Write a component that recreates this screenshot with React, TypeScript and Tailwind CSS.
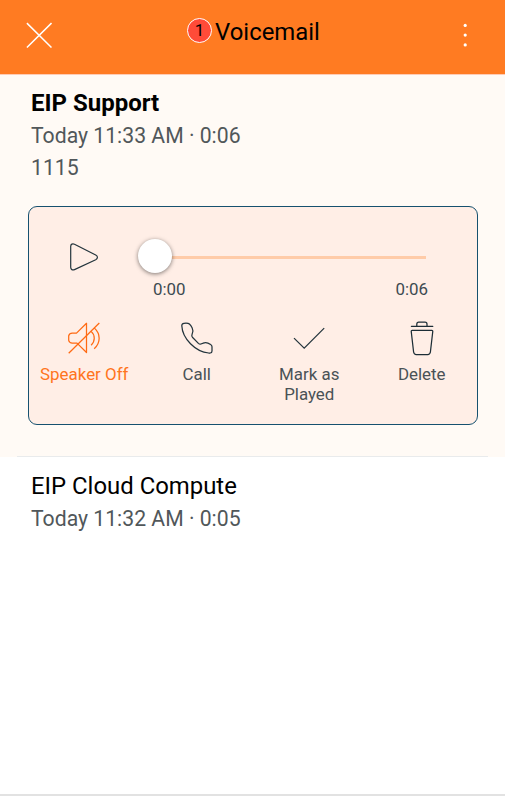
import type { ReactNode } from "react";

function CloseIcon() {
  return (
    <svg className="size-[26px]" viewBox="0 0 26 26" fill="none" stroke="#fff" strokeWidth="1.5">
      <path d="M0.9 1.1 25.5 25.5M25.5 1.1 0.9 25.5" />
    </svg>
  );
}

function MoreIcon() {
  return (
    <svg className="h-[26px] w-[6px]" viewBox="0 0 6 26" fill="#fff">
      <circle cx="3.2" cy="3.4" r="1.6" />
      <circle cx="3.2" cy="13.1" r="1.6" />
      <circle cx="3.2" cy="22.9" r="1.6" />
    </svg>
  );
}

function PlayIcon() {
  return (
    <svg className="h-[30px] w-[30px] shrink-0" viewBox="0 0 30 30" fill="none" stroke="#23343c" strokeWidth="1.2" strokeLinejoin="round">
      <path d="M1.7 4.4V25.3C1.7 27.5 3.5 28.5 5.5 27.6L26.7 17.7C29 16.5 29 14.2 26.7 13L5.5 2.2C3.5 1.3 1.7 2.2 1.7 4.4Z" />
    </svg>
  );
}

function SpeakerOffIcon() {
  return (
    <svg className="h-[36px] w-[36px]" viewBox="0 0 36 36" fill="none" stroke="#ff6a13" strokeWidth="1.25" strokeLinejoin="round">
      <path d="M20.5 3.3V32.5L11 23.1H6.2C4.2 23.1 3.2 22.2 2.7 20.4V15.7C3.2 14 4.2 13.1 6.2 13.1H10.5L20.5 3.3Z" />
      <path d="M33.3 3 2.7 33.2" />
      <path d="M25.1 11.4C29.3 15 29.3 21.5 25.1 25.2" />
      <path d="M28.2 7.9C34.8 13.8 34.8 22.8 28.2 28.8" />
    </svg>
  );
}

function PhoneIcon() {
  return (
    <svg className="h-[36px] w-[36px]" viewBox="0 0 36 36" fill="none" stroke="#23343c" strokeWidth="1.25" strokeLinejoin="round">
      <path d="M5 3.3C3.3 3.5 2.7 4.2 2.8 5.8C3.4 18.6 16.4 31.9 29.7 33H31.2C32.5 32.9 33 32.2 33 30.9V26.8C33 25.7 32.6 25.1 31.6 24.5C28.8 22.5 26.6 21.9 24.2 23.1L22 24C20.9 24.3 20.2 24.1 19.4 23.4L13.4 17.2C12.6 16.3 12.6 15.4 13.1 14.2C14.2 12 14.2 9.8 13.1 7.7C12.4 6.3 11.6 5.1 10.4 4C9.4 3.1 7.3 3.1 5 3.3Z" />
    </svg>
  );
}

function CheckIcon() {
  return (
    <svg className="h-[36px] w-[36px]" viewBox="0 0 36 36" fill="none" stroke="#23343c" strokeWidth="1.25">
      <path d="M3 18.1 13.2 28.2 33.2 8.1" />
    </svg>
  );
}

function TrashIcon() {
  return (
    <svg className="h-[36px] w-[36px]" viewBox="0 0 36 36" fill="none" stroke="#1c2d36" strokeWidth="1.25" strokeLinejoin="round" strokeLinecap="round">
      <path d="M7.4 6.3H28.8" />
      <path d="M12.8 6V4.2C12.8 2.8 13.4 2.2 14.8 2.2H21C22.4 2.2 23 2.8 23 4.2V6" />
      <path d="M7.2 11.2C7.2 10.6 7.5 10.3 8.1 10.3H27.9C28.5 10.3 28.8 10.6 28.8 11.2L26.4 32C26.1 33.8 25.4 34.6 23.7 34.6H12.3C10.6 34.6 9.9 33.8 9.6 32Z" />
    </svg>
  );
}

function Action({ icon, label, active }: { icon: ReactNode; label: ReactNode; active?: boolean }) {
  return (
    <div className={`flex flex-col items-center text-center text-[16.9px] leading-5 ${active ? "text-[#ff7420]" : "text-[#4a5256]"}`}>
      {icon}
      <span className="mt-[8px] whitespace-nowrap">{label}</span>
    </div>
  );
}

export default function App() {
  return (
    <div className="flex h-[800px] w-[505px] flex-col overflow-hidden bg-white font-['Roboto',sans-serif]">
      <header className="flex h-[75px] shrink-0 items-start justify-between border-b border-[#ffcbb4] bg-[#ff7b22] pr-[37px] pl-[26px]">
        <button className="mt-[22px]"><CloseIcon /></button>
        <div className="flex pt-4 pr-[7px]">
          <span className="mt-[2px] flex size-[25px] items-center justify-center rounded-full border-[1.5px] border-white bg-[#ff4b38] text-[17px] leading-none text-black">1</span>
          <h1 className="ml-[3px] text-[23.9px] leading-8 text-black">Voicemail</h1>
        </div>
        <button className="mt-[22px]"><MoreIcon /></button>
      </header>

      <section className="h-[382px] shrink-0 bg-[#fffaf5] px-7 pt-3">
        <div className="pl-[3px] text-[21.2px] leading-8 text-[#51575a]">
          <h2 className="text-2xl leading-8 font-bold text-black">EIP Support</h2>
          <p className="pt-px">Today 11:33 AM · 0:06</p>
          <p>1115</p>
        </div>

        <div className="mt-[22px] h-[219px] w-[450px] rounded-[9px] border border-[#16516f] bg-[#ffeee6]">
          <div className="flex pt-[35px] pl-10">
            <PlayIcon />
            <div className="ml-[38.5px] w-[290.5px]">
              <div className="flex h-[30px] items-center">
                <div className="z-10 -mt-[2px] size-[34px] shrink-0 rounded-full bg-white shadow-[0_1px_4px_rgba(0,0,0,0.5)]" />
                <div className="mt-px h-[3px] w-[254.5px] bg-[#ffcba8]" />
              </div>
              <div className="mt-[7px] flex justify-between pl-[15.5px] text-[16.9px] leading-5 text-[#3d4a51]">
                <span>0:00</span>
                <span>0:06</span>
              </div>
            </div>
          </div>
          <div className="-mx-px mt-[21px] grid grid-cols-4">
            <Action icon={<SpeakerOffIcon />} label="Speaker Off" active />
            <Action icon={<PhoneIcon />} label="Call" />
            <Action icon={<CheckIcon />} label={<>Mark as<br />Played</>} />
            <Action icon={<TrashIcon />} label="Delete" />
          </div>
        </div>
        <div className="-mx-[11px] mt-[31px] h-px bg-[#e9ebec]" />
      </section>

      <section className="grow px-[31px] pt-[13px] text-[21.2px] leading-8 text-[#51575a]">
        <h2 className="text-[23.9px] leading-8 font-normal text-black">EIP Cloud Compute</h2>
        <p className="pt-px">Today 11:32 AM · 0:05</p>
      </section>
      <footer className="h-[6px] shrink-0 border-t-2 border-[#e2e2e2] bg-white" />
    </div>
  );
}
